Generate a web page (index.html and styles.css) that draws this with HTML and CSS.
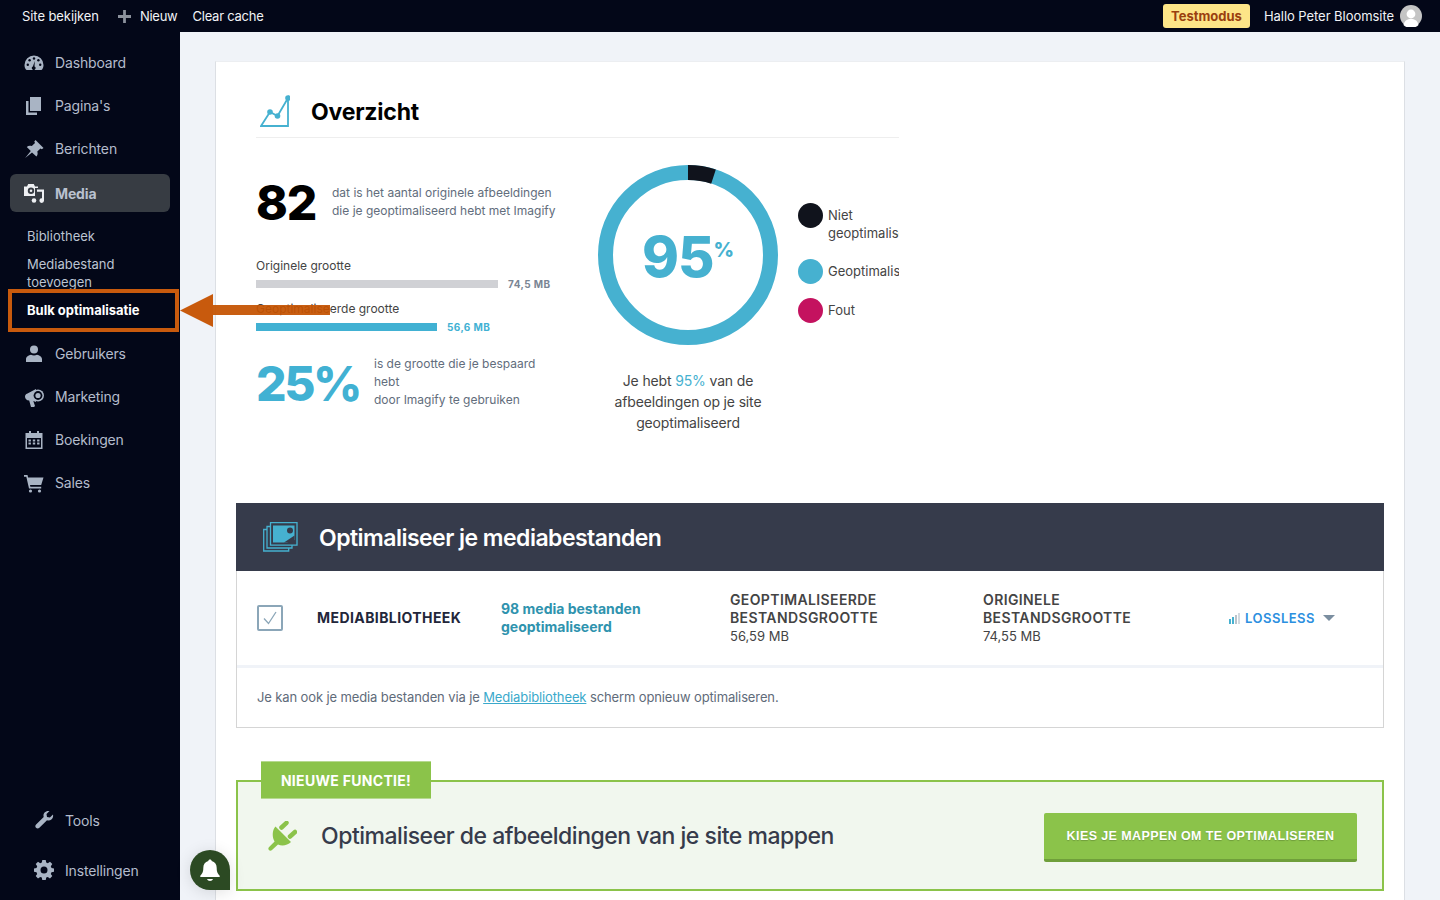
FILE: index.html
```html
<!DOCTYPE html>
<html lang="nl">
<head>
  <meta charset="UTF-8" />
  <title>Bulk optimalisatie – Imagify</title>
  <link rel="stylesheet" href="styles.css">
</head>
<body>
<header class="topbar">
  <a class="topbar-link topbar-site">Site bekijken</a>
  <a class="topbar-link topbar-new">
    <svg class="plus" viewBox="0 0 14 14"><path d="M5.500 0h3v5.500H14v3H8.500V14h-3V8.500H0v-3h5.500z"/></svg>
    Nieuw
  </a>
  <a class="topbar-link topbar-cache">Clear cache</a>
  <div class="topbar-right">
    <span class="badge-test">Testmodus</span>
    <span class="topbar-link topbar-user">Hallo Peter Bloomsite</span>
    <span class="avatar">
      <svg viewBox="0 0 22 22"><circle cx="11" cy="11" r="11" fill="#c4c4c4"/><circle cx="11" cy="9" r="4.400" fill="#fff"/><path d="M3.500 20c1-4.500 4-6 7.500-6s6.500 1.500 7.500 6a11 11 0 0 1-15 0z" fill="#fff"/></svg>
    </span>
  </div>
</header>

<div class="shell">
  <aside class="sidebar">
    <nav class="menu">
      <a class="menu-item">
        <svg class="menu-icon" viewBox="0 0 20 20"><path class="fill" d="M10 2.500a9.500 9.500 0 0 0-9.500 9.500c0 1.800.5 3.300 1.400 4.600.2.300.5.400.8.400h14.600c.3 0 .6-.1.800-.4.900-1.300 1.400-2.800 1.400-4.600A9.500 9.500 0 0 0 10 2.500z"/><g class="cut"><circle cx="10" cy="5.500" r="1.200"/><circle cx="5.600" cy="7.300" r="1.200"/><circle cx="14.400" cy="7.300" r="1.200"/><circle cx="3.800" cy="11.700" r="1.200"/><circle cx="16.200" cy="11.700" r="1.200"/><path d="M10.800 8l-.3 5.600a1.800 1.800 0 1 1-1.600 0z"/></g></svg>
        Dashboard
      </a>
      <a class="menu-item">
        <svg class="menu-icon" viewBox="0 0 20 20"><path class="fill" d="M6 1h11v14H6z"/><path class="fill" d="M2 5h2.500v11.500H13V19H2z"/></svg>
        Pagina's
      </a>
      <a class="menu-item">
        <svg class="menu-icon" viewBox="0 0 20 20"><path class="fill" d="M11.500 1l8 8-1.700 1.200-1.300-.8-3.200 3.200c.7 2 .3 3.800-.9 5L8 13.400 1.200 19l5.600-6.900L2.800 8c1.300-1.200 3-1.600 5-.9L11 3.900l-.7-1.400z"/></svg>
        Berichten
      </a>
      <a class="menu-item menu-active">
        <svg class="menu-icon" viewBox="0 0 20 20"><path class="fill-light" d="M0 3.500h3L4.200 1h5.600L11 3.500h3v9.500H0z"/><circle class="cut-fill" cx="7" cy="7.800" r="3.200"/><circle class="fill-light" cx="7" cy="7.800" r="1.300"/><path class="cut-fill" d="M11 5h9v15h-9z"/><path class="fill-light" d="M13 6.500h7v11a2.300 2.300 0 1 1-2-2.200V8.800h-5z"/><circle class="fill-light" cx="10" cy="17.500" r="2.300"/></svg>
        Media
      </a>
      <ul class="submenu">
        <li>Bibliotheek</li>
        <li>Mediabestand toevoegen</li>
        <li class="sub-current">Bulk optimalisatie</li>
      </ul>
      <a class="menu-item">
        <svg class="menu-icon" viewBox="0 0 20 20"><circle class="fill" cx="10" cy="5.500" r="4"/><path class="fill" d="M2 18v-3c0-2.200 2.600-4 5-4.300 1.700 1 4.300 1 6 0 2.400.3 5 2.100 5 4.300v3z"/></svg>
        Gebruikers
      </a>
      <a class="menu-item">
        <svg class="menu-icon" viewBox="0 0 20 20"><path class="fill" d="M1 9.500C1 8 2 7 3 6.700L12 2v13l-2.700-1L11 19l-1 1H7l-1.800-6.500C2.500 13.500 1 11.500 1 9.500z"/><circle class="fill" cx="14" cy="8.500" r="6"/><circle class="cut-fill" cx="14" cy="8.500" r="4.400"/><circle class="fill" cx="14" cy="8.500" r="2.600"/></svg>
        Marketing
      </a>
      <a class="menu-item">
        <svg class="menu-icon" viewBox="0 0 20 20"><path class="fill" d="M1.500 3H5V1h2v2h6V1h2v2h3.500v16h-17zM3 8v9.500h14V8z"/><path class="fill" d="M4.500 9.500h2.400v2H4.500zM8.800 9.500h2.400v2H8.800zM13.100 9.500h2.400v2h-2.400zM4.500 12.500h2.400v2H4.500zM8.800 12.500h2.400v2H8.800zM13.100 12.500h2.400v2h-2.400z"/></svg>
        Boekingen
      </a>
      <a class="menu-item">
        <svg class="menu-icon" viewBox="0 0 20 20"><path class="fill" d="M0 2h3.500l.6 2.500H19.500l-2.300 7.500H6l.4 1.800h10.800v1.700H5L2.300 3.700H0z"/><circle class="fill" cx="6.500" cy="18" r="1.600"/><circle class="fill" cx="15.500" cy="18" r="1.600"/></svg>
        Sales
      </a>
    </nav>
    <nav class="menu-bottom">
      <a class="menu-item menu-item-low">
        <svg class="menu-icon" viewBox="0 0 20 20"><path class="fill" d="M19 4.500c.5 2-.2 3.900-1.600 5-1.300 1-2.900 1.200-4.400.7l-7.600 7.500c-1 1-2.500 1-3.400.1-.9-1-.9-2.400.1-3.400L9.700 7c-.5-1.500-.2-3.200.9-4.400 1.200-1.300 3-2 4.900-1.500l-3 3 .5 2.900 2.900.5z"/></svg>
        Tools
      </a>
      <a class="menu-item menu-item-low">
        <svg class="menu-icon" viewBox="0 0 20 20"><path class="fill" d="M8.300 0h3.400l.5 2.600 1.600.7 2.200-1.500 2.300 2.300-1.500 2.200.7 1.600 2.500.5v3.400l-2.500.5-.7 1.600 1.500 2.200-2.300 2.300-2.200-1.500-1.600.7-.5 2.600H8.300l-.5-2.600-1.600-.7-2.200 1.500-2.300-2.300 1.500-2.200-.7-1.600L0 11.800V8.400l2.500-.5.7-1.600-1.500-2.200L4 1.800l2.200 1.500 1.600-.7zM10 6.500a3.500 3.500 0 1 0 0 7 3.500 3.500 0 0 0 0-7z"/></svg>
        Instellingen
      </a>
    </nav>
  </aside>

  <main class="main">
    <section class="card">
      <div class="overview">
        <div class="overview-head">
          <svg class="chart-icon" viewBox="0 0 30 32">
            <path d="M1 31 10 17l7.500 4L28 3v28z" fill="none" stroke="#46b1d0" stroke-width="1.800"/>
            <circle cx="10" cy="17" r="2.800" fill="#46b1d0"/><circle cx="17.500" cy="21" r="2.800" fill="#46b1d0"/><circle cx="28" cy="3" r="2.800" fill="#46b1d0"/>
          </svg>
          <h1>Overzicht</h1>
        </div>
        <div class="overview-body">
          <div class="stats">
            <div class="stat-row count-row">
              <span class="big-number">82</span>
              <p class="stat-text">dat is het aantal originele afbeeldingen<br>die je geoptimaliseerd hebt met Imagify</p>
            </div>
            <div class="bars">
              <div class="bar-label">Originele grootte</div>
              <div class="bar-row">
                <span class="bar bar-orig"></span><span class="bar-value">74,5 MB</span>
              </div>
              <div class="bar-label">Geoptimaliseerde grootte</div>
              <div class="bar-row">
                <span class="bar bar-opt"></span><span class="bar-value value-blue">56,6 MB</span>
              </div>
            </div>
            <div class="stat-row saved-row">
              <span class="big-number value-blue">25%</span>
              <p class="stat-text saved-text">is de grootte die je bespaard hebt<br>door Imagify te gebruiken</p>
            </div>
          </div>
          <div class="donut-col">
            <div class="donut">
              <svg viewBox="0 0 180 180">
                <circle cx="90" cy="90" r="82.500" fill="none" stroke="#46b1d0" stroke-width="15"/>
                <path d="M90 7.500a82.500 82.500 0 0 1 25.500 4.040" fill="none" stroke="#10131c" stroke-width="15"/>
              </svg>
              <div class="donut-label"><span class="donut-num">95</span><span class="donut-pct">%</span></div>
            </div>
            <p class="donut-caption">Je hebt <span class="value-blue">95%</span> van de afbeeldingen op je site geoptimaliseerd</p>
          </div>
          <ul class="legend">
            <li><i class="dot dot-dark"></i><span>Niet geoptimaliseerd</span></li>
            <li><i class="dot dot-blue"></i><span>Geoptimaliseerd</span></li>
            <li><i class="dot dot-red"></i><span>Fout</span></li>
          </ul>
        </div>
      </div>

      <div class="panel">
        <div class="panel-head">
          <svg class="stack-icon" viewBox="0 0 35 30">
            <g fill="none" stroke="#46b1d0" stroke-width="1.300">
              <path d="M4 7.500H.7v21.500h25v-3"/>
              <path d="M7.500 4.500H4v21.500h25v-3"/>
              <path d="M7.500.7h26.500v22.500H7.500z" fill="#363b4b"/>
            </g>
            <path d="M10 3.500h21.500V18L24 20.500H10z" fill="#46b1d0"/>
            <path d="M21 20.500h10.500v-7z" fill="#363b4b"/>
            <circle cx="27" cy="8.500" r="3" fill="#363b4b"/>
          </svg>
          <h2>Optimaliseer je mediabestanden</h2>
        </div>
        <div class="panel-row">
          <span class="checkbox">
            <svg viewBox="0 0 26 26"><path d="M7 13.500l4.500 5L19 7" fill="none" stroke="#8ba6b8" stroke-width="1.300"/></svg>
          </span>
          <strong class="lib-name">MEDIABIBLIOTHEEK</strong>
          <span class="lib-count">98 media bestanden geoptimaliseerd</span>
          <div class="lib-col"><strong>GEOPTIMALISEERDE BESTANDSGROOTTE</strong><span>56,59 MB</span></div>
          <div class="lib-col"><strong>ORIGINELE BESTANDSGROOTTE</strong><span>74,55 MB</span></div>
          <div class="lossless">
            <svg class="signal" viewBox="0 0 11 11">
              <path d="M0 6h2v5H0z" fill="#46b1d0"/><path d="M3 4h2v7H3z" fill="#46b1d0"/><path d="M6 2h2v9H6z" fill="#b9c4cc"/><path d="M9 0h2v11H9z" fill="#d3dae0"/>
            </svg>
            <span>LOSSLESS</span>
            <i class="caret"></i>
          </div>
        </div>
        <p class="panel-foot">Je kan ook je media bestanden via je <a class="foot-link">Mediabibliotheek</a> scherm opnieuw optimaliseren.</p>
      </div>

      <div class="promo">
        <span class="promo-tab">NIEUWE FUNCTIE!</span>
        <svg class="plug-icon" viewBox="0 0 30 30">
          <g fill="none" stroke="#8bc34a" stroke-width="4.500" stroke-linecap="round">
            <path d="M14.500 6.500l5-4.700"/>
            <path d="M23 15.500l5-4.500"/>
          </g>
          <path d="M8.500 5.500 24 21c-3.500 3.500-9 4.500-13 2.500l-6 5.500c-1 .9-2.300.9-3.100 0-.8-.9-.7-2.100.2-3l5.500-5.500C5 16.500 5 9 8.500 5.500z" fill="#8bc34a"/>
        </svg>
        <h2 class="promo-title">Optimaliseer de afbeeldingen van je site mappen</h2>
        <a class="promo-btn">KIES JE MAPPEN OM TE OPTIMALISEREN</a>
      </div>
    </section>
  </main>
</div>

<!-- annotatie over de pagina -->
<div class="mark-box"></div>
<svg class="mark-head" viewBox="0 0 33 33"><path d="M0 16.500 33 0v33z" fill="#c85a0d"/></svg>
<div class="mark-shaft"></div>

<div class="bell">
  <svg viewBox="0 0 24 24"><path d="M12 1.500c1 0 1.700.7 1.700 1.600 3.300.8 5 3.500 5 7 0 4.300 1.200 5.900 3 7.600v1.300H2.300v-1.300c1.800-1.700 3-3.300 3-7.600 0-3.500 1.700-6.200 5-7 0-.9.700-1.600 1.700-1.600z" fill="#fff"/><path d="M9 21h6c-.4 1.200-1.600 2-3 2s-2.600-.8-3-2z" fill="#fff"/></svg>
</div>
</body>
</html>
```

FILE: styles.css
```css
* {
  box-sizing: border-box;
}
html, body {
  height: 100%;
}
body {
  margin: 0;
  font-family: 'Inter', sans-serif;
  background: #f0f3f8;
  color: #444;
  overflow: hidden;
}
h1, h2, p, ul {
  margin: 0;
  padding: 0;
}
ul {
  list-style: none;
}

/* topbar */
.topbar {
  height: 32px;
  background: #030718;
  display: flex;
  align-items: center;
  padding: 0 18px 0 22px;
  gap: 15px;
}
.topbar-link {
  color: #f1f3f6;
  font-size: 13px;
  white-space: nowrap;
}
.topbar-site {
  letter-spacing: -0.08px;
  margin-right: 1px;
}
.topbar-new {
  display: flex;
  align-items: center;
  gap: 9px;
  margin-left: 3px;
  letter-spacing: -0.25px;
}
.topbar-cache {
  letter-spacing: -0.25px;
}
.topbar-user {
  letter-spacing: -0.05px;
}
.plus {
  width: 13px;
  height: 13px;
  fill: #8b919c;
}
.topbar-right {
  margin-left: auto;
  display: flex;
  align-items: center;
  gap: 14px;
}
.badge-test {
  width: 87px;
  height: 24px;
  line-height: 24px;
  text-align: center;
  background: #fde588;
  color: #9a400f;
  font-size: 13px;
  font-weight: 700;
  border-radius: 3px;
}
.avatar {
  width: 22px;
  height: 22px;
  margin-left: -8px;
}
.avatar svg {
  display: block;
}

.shell {
  display: flex;
  height: 868px;
}

/* sidebar */
.sidebar {
  width: 180px;
  flex: none;
  background: #030718;
  display: flex;
  flex-direction: column;
  padding-top: 9px;
  padding-bottom: 5px;
}
.menu-item {
  display: flex;
  align-items: center;
  gap: 11px;
  height: 43px;
  padding-left: 24px;
  font-size: 14px;
  letter-spacing: -0.15px;
  color: #b4bccc;
}
.menu-icon {
  width: 20px;
  height: 20px;
  flex: none;
}
.menu-icon .fill {
  fill: #a9b4c4;
}
.menu-icon .cut, .menu-icon .cut-fill {
  fill: #030718;
}
.menu-icon .fill-light {
  fill: #eef0f3;
}
.menu-active {
  height: 38px;
  margin: 4px 10px 0;
  padding-left: 14px;
  background: #373c43;
  border-radius: 6px;
  font-weight: 700;
  color: #b9c1cf;
}
.menu-active .cut-fill {
  fill: #373c43;
}
.submenu {
  padding: 15px 0 13px 27px;
  display: flex;
  flex-direction: column;
  gap: 10px;
  font-size: 13px;
  line-height: 18px;
  color: #bcc4d2;
}
.submenu li {
  width: 120px;
}
.submenu .sub-current {
  width: 140px;
  color: #fff;
  font-weight: 700;
}
.menu-bottom {
  margin-top: auto;
}
.menu-item-low {
  height: 50px;
  padding-left: 34px;
}

/* annotatie */
.mark-box {
  position: absolute;
  left: 8px;
  top: 289px;
  width: 171px;
  height: 43px;
  border: 4px solid #c85a0d;
}
.mark-head {
  position: absolute;
  left: 180px;
  top: 294px;
  width: 33px;
  height: 33px;
}
.mark-shaft {
  position: absolute;
  left: 213px;
  top: 305px;
  width: 117px;
  height: 10px;
  background: rgba(196, 82, 0, 0.93);
}

/* content */
.main {
  flex: 1;
  padding: 29px 35px 0;
  overflow: hidden;
}
.card {
  background: #fff;
  border: 1px solid #dcdfe4;
  border-top-color: #eceef1;
  padding: 21px 20px 40px;
  min-height: 900px;
}
.overview {
  width: 643px;
  margin-left: 20px;
  overflow: hidden;
}
.overview-head {
  display: flex;
  align-items: flex-start;
  gap: 21px;
  padding: 12px 0 8px 4px;
  border-bottom: 1px solid #eeeeee;
}
.chart-icon {
  width: 30px;
  height: 32px;
  flex: none;
}
.overview-head h1 {
  font-size: 23px;
  line-height: 34px;
  font-weight: 700;
  color: #000;
  letter-spacing: -0.2px;
}
.overview-body {
  display: flex;
  height: 296px;
}
.stats {
  width: 342px;
  flex: none;
  padding-top: 38px;
}
.stat-row {
  display: flex;
  align-items: center;
  gap: 16px;
}
.count-row {
  height: 54px;
}
.count-row .stat-text {
  margin-bottom: 2px;
}
.big-number {
  font-size: 48px;
  line-height: 54px;
  font-weight: 800;
  letter-spacing: -1.2px;
  color: #000;
  flex: none;
}
.count-row .big-number {
  width: 60px;
}
.saved-row .big-number {
  width: 102px;
  margin-top: 4px;
  letter-spacing: -2.4px;
}
.stat-text {
  font-size: 12px;
  line-height: 18px;
  color: #626d7c;
}
.bars {
  margin-top: 26px;
}
.bar-label {
  font-size: 12px;
  line-height: 20px;
  color: #444;
}
.bar-row {
  display: flex;
  align-items: center;
  gap: 10px;
  height: 8px;
  margin: 4px 0 11px;
}
.bar {
  height: 8px;
  display: block;
}
.bar-orig {
  width: 242px;
  background: #d0d1d5;
}
.bar-opt {
  width: 181px;
  background: #41b1d3;
}
.bar-value {
  font-size: 10px;
  font-weight: 700;
  letter-spacing: 0.4px;
  color: #7a8594;
}
.value-blue {
  color: #41b1d3;
}
.big-number.value-blue {
  color: #41b1d3;
}
.saved-row {
  margin-top: 22px;
}
.saved-text {
  width: 170px;
}
.donut-col {
  width: 180px;
  flex: none;
  padding-top: 27px;
}
.donut {
  position: relative;
  width: 180px;
  height: 180px;
}
.donut svg {
  display: block;
}
.donut-label {
  position: absolute;
  inset: 0;
  padding-top: 3px;
  display: flex;
  align-items: center;
  justify-content: center;
  color: #46b1d0;
  font-weight: 800;
}
.donut-num {
  font-size: 56px;
  line-height: 60px;
  letter-spacing: -1px;
}
.donut-pct {
  font-size: 20px;
  line-height: 20px;
  margin-bottom: 14px;
}
.donut-caption {
  margin-top: 25px;
  font-size: 14px;
  line-height: 21px;
  letter-spacing: -0.15px;
  text-align: center;
  color: #444;
}
.donut-caption .value-blue {
  color: #46b1d0;
}
.legend {
  flex: none;
  width: 101px;
  margin-left: 20px;
  padding-top: 65px;
  display: flex;
  flex-direction: column;
  gap: 14px;
}
.legend li {
  display: flex;
  gap: 5px;
  min-height: 25px;
  font-size: 13px;
  line-height: 18px;
  color: #444;
}
.legend span {
  width: 71px;
  margin: 3px 0;
}
.dot {
  width: 25px;
  height: 25px;
  border-radius: 50%;
  flex: none;
}
.dot-dark {
  background: #10131c;
}
.dot-blue {
  background: #46b1d0;
}
.dot-red {
  background: #c4125f;
}

/* mediabestanden */
.panel {
  margin-top: 69px;
  border: 1px solid #d5d5d5;
  border-top: 0;
}
.panel-head {
  height: 68px;
  margin: 0 -1px;
  background: #363b4b;
  display: flex;
  align-items: center;
  gap: 21px;
  padding-left: 27px;
}
.stack-icon {
  width: 35px;
  height: 30px;
  flex: none;
}
.panel-head h2 {
  margin-top: 2px;
  font-size: 23px;
  font-weight: 600;
  letter-spacing: -0.53px;
  color: #fff;
}
.panel-row {
  height: 97px;
  padding: 0 0 0 20px;
  border-bottom: 3px solid #f0f3f8;
  display: grid;
  grid-template-columns: 60px 184px 229px 253px 246px auto;
  align-items: center;
  line-height: 18px;
}
.checkbox {
  width: 26px;
  height: 26px;
  border: 2px solid #8ba6b8;
  border-radius: 2px;
  position: relative;
}
.checkbox svg {
  position: absolute;
  left: -2px;
  top: -2px;
  width: 26px;
  height: 26px;
}
.lib-name {
  font-size: 14px;
  letter-spacing: 0.42px;
  color: #22263a;
}
.lib-count {
  width: 190px;
  font-size: 14px;
  font-weight: 700;
  color: #2f93ae;
}
.lib-col {
  display: flex;
  flex-direction: column;
  width: 180px;
  font-size: 13px;
  color: #444;
}
.lib-col strong {
  font-size: 14px;
  letter-spacing: 0.38px;
  font-weight: 600;
}
.lossless {
  display: flex;
  align-items: center;
  gap: 5px;
  font-size: 13px;
  font-weight: 600;
  letter-spacing: 0.5px;
  color: #2b8fe0;
}
.signal {
  width: 11px;
  height: 11px;
}
.caret {
  width: 0;
  height: 0;
  margin-left: 3px;
  border-left: 6px solid transparent;
  border-right: 6px solid transparent;
  border-top: 6px solid #7b8ea0;
}
.panel-foot {
  height: 59px;
  line-height: 59px;
  padding-left: 20px;
  font-size: 13px;
  letter-spacing: -0.12px;
  color: #5f6b7a;
}
.foot-link {
  color: #3aa9cb;
  text-decoration: underline;
}

/* nieuwe functie */
.promo {
  position: relative;
  margin-top: 52px;
  height: 111px;
  border: 2px solid #8bc34a;
  background: #f1f7ee;
  display: flex;
  align-items: center;
  padding: 0 25px 0 29px;
}
.promo-tab {
  position: absolute;
  left: 23px;
  top: -21px;
  width: 170px;
  height: 38px;
  line-height: 38px;
  text-align: center;
  background: #8bc34a;
  border-top: 1px solid #b6d98f;
  border-bottom: 1px solid #b6d98f;
  color: #fff;
  font-size: 14px;
  font-weight: 700;
  letter-spacing: 0.3px;
}
.plug-icon {
  width: 30px;
  height: 30px;
  flex: none;
}
.promo-title {
  margin-left: 24px;
  font-size: 23px;
  font-weight: 500;
  letter-spacing: -0.48px;
  color: #363b4b;
}
.promo-btn {
  margin-left: auto;
  margin-top: 4px;
  width: 313px;
  height: 49px;
  line-height: 47px;
  text-align: center;
  background: #8bc34a;
  border-bottom: 3px solid #6f9f3a;
  border-radius: 2px;
  font-family: 'Liberation Sans', sans-serif;
  font-size: 12.5px;
  font-weight: 700;
  letter-spacing: 0.4px;
  color: #fff;
  text-shadow: 0 1px 1px rgba(0, 0, 0, 0.2);
}

/* bel */
.bell {
  position: fixed;
  left: 190px;
  top: 850px;
  width: 40px;
  height: 40px;
  border-radius: 20px 20px 0 20px;
  background: #2c4a23;
  box-shadow: 0 2px 16px rgba(0, 0, 0, 0.12);
  display: flex;
  align-items: center;
  justify-content: center;
}
.bell svg {
  width: 24px;
  height: 24px;
}
```
